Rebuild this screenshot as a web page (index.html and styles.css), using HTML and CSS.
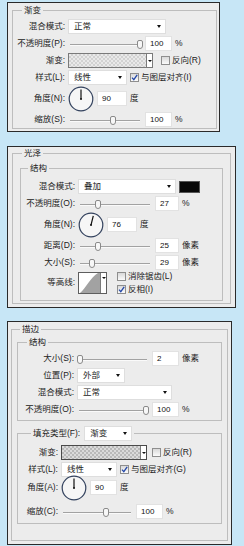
FILE: index.html
```html
<!DOCTYPE html>
<html lang="zh-CN">
<head>
    <meta charset="UTF-8">
    <meta name="viewport" content="width=device-width, initial-scale=1.0">
    <title>图层样式</title>
    <link rel="stylesheet" href="styles.css">
</head>
<body>
    <!-- 渐变叠加 -->
    <div class="panel p1">
        <fieldset class="g1">
            <legend>渐变</legend>
            <div class="row">
                <span class="lbl">混合模式:</span>
                <div class="select mode"><span>正常</span><i class="arrow"></i></div>
            </div>
            <div class="row">
                <span class="lbl">不透明度(P):</span>
                <div class="slider"><div class="track"><span class="thumb" style="left:100%"></span></div></div>
                <span class="num">100</span>
                <span class="unit">%</span>
            </div>
            <div class="row">
                <span class="lbl">渐变:</span>
                <div class="gradient"><span class="checker"></span><span class="drop"><i class="arrow"></i></span></div>
                <label class="check"><span class="box"></span>反向(R)</label>
            </div>
            <div class="row">
                <span class="lbl">样式(L):</span>
                <div class="select style-sel"><span>线性</span><i class="arrow"></i></div>
                <label class="check"><span class="box"><svg width="7" height="7" viewBox="0 0 7 7"><path d="M1 3.6 L2.8 5.6 L6.2 0.8" fill="none" stroke="#2347a8" stroke-width="1.3"/></svg></span>与图层对齐(I)</label>
            </div>
            <div class="row dial-row">
                <span class="lbl">角度(N):</span>
                <svg class="dial" width="26" height="26" viewBox="0 0 26 26">
                    <circle cx="13" cy="13" r="11.8" fill="#f6f6f6" stroke="#33425e" stroke-width="1.2"/>
                    <line x1="13" y1="13" x2="13" y2="3.5" stroke="#111" stroke-width="1.2"/>
                    <circle cx="13" cy="13" r="1" fill="#111"/>
                </svg>
                <span class="num wide">90</span>
                <span class="unit">度</span>
            </div>
            <div class="row">
                <span class="lbl">缩放(S):</span>
                <div class="slider"><div class="track"><span class="thumb" style="left:62%"></span></div></div>
                <span class="num">100</span>
                <span class="unit">%</span>
            </div>
        </fieldset>
    </div>

    <!-- 光泽 -->
    <div class="panel p2">
        <fieldset class="g2">
            <legend>光泽</legend>
            <fieldset class="sub">
                <legend>结构</legend>
                <div class="row">
                    <span class="lbl">混合模式:</span>
                    <div class="select mode"><span>叠加</span><i class="arrow"></i></div>
                    <span class="color"></span>
                </div>
                <div class="row">
                    <span class="lbl">不透明度(O):</span>
                    <div class="slider"><div class="track"><span class="thumb" style="left:25%"></span></div></div>
                    <span class="num">27</span>
                    <span class="unit">%</span>
                </div>
                <div class="row dial-row">
                    <span class="lbl">角度(N):</span>
                    <svg class="dial" width="26" height="26" viewBox="0 0 26 26">
                        <circle cx="13" cy="13" r="11.8" fill="#f6f6f6" stroke="#33425e" stroke-width="1.2"/>
                        <line x1="13" y1="13" x2="15.3" y2="3.8" stroke="#111" stroke-width="1.2"/>
                        <circle cx="13" cy="13" r="1" fill="#111"/>
                    </svg>
                    <span class="num wide">76</span>
                    <span class="unit">度</span>
                </div>
                <div class="row">
                    <span class="lbl">距离(D):</span>
                    <div class="slider"><div class="track"><span class="thumb" style="left:25%"></span></div></div>
                    <span class="num">25</span>
                    <span class="unit">像素</span>
                </div>
                <div class="row">
                    <span class="lbl">大小(S):</span>
                    <div class="slider"><div class="track"><span class="thumb" style="left:17%"></span></div></div>
                    <span class="num">29</span>
                    <span class="unit">像素</span>
                </div>
                <div class="row contour-row">
                    <span class="lbl">等高线:</span>
                    <div class="contour">
                        <svg width="21" height="20" viewBox="0 0 21 20"><path d="M1 20 C7 15 11 5 19 0 L21 0 L21 20 Z" fill="#a2a2a2"/></svg>
                        <span class="drop top"><i class="arrow"></i></span>
                    </div>
                    <div class="checks">
                        <label class="check"><span class="box"></span>消除锯齿(L)</label>
                        <label class="check"><span class="box"><svg width="7" height="7" viewBox="0 0 7 7"><path d="M1 3.6 L2.8 5.6 L6.2 0.8" fill="none" stroke="#2347a8" stroke-width="1.3"/></svg></span>反相(I)</label>
                    </div>
                </div>
            </fieldset>
        </fieldset>
    </div>

    <!-- 描边 -->
    <div class="panel p3">
        <fieldset class="g3">
            <legend>描边</legend>
            <fieldset class="sub">
                <legend>结构</legend>
                <div class="row">
                    <span class="lbl">大小(S):</span>
                    <div class="slider"><div class="track"><span class="thumb" style="left:1%"></span></div></div>
                    <span class="num">2</span>
                    <span class="unit">像素</span>
                </div>
                <div class="row">
                    <span class="lbl">位置(P):</span>
                    <div class="select pos"><span>外部</span><i class="arrow"></i></div>
                </div>
                <div class="row">
                    <span class="lbl">混合模式:</span>
                    <div class="select mode"><span>正常</span><i class="arrow"></i></div>
                </div>
                <div class="row">
                    <span class="lbl">不透明度(O):</span>
                    <div class="slider"><div class="track"><span class="thumb" style="left:98%"></span></div></div>
                    <span class="num">100</span>
                    <span class="unit">%</span>
                </div>
            </fieldset>
            <fieldset class="sub fill-grp">
                <legend>
                    <span>填充类型(F):</span>
                    <div class="select kind"><span>渐变</span><i class="arrow"></i></div>
                </legend>
                <div class="row">
                    <span class="lbl">渐变:</span>
                    <div class="gradient dark"><span class="checker"></span><span class="drop"><i class="arrow"></i></span></div>
                    <label class="check"><span class="box"></span>反向(R)</label>
                </div>
                <div class="row">
                    <span class="lbl">样式(L):</span>
                    <div class="select style-sel"><span>线性</span><i class="arrow"></i></div>
                    <label class="check"><span class="box"><svg width="7" height="7" viewBox="0 0 7 7"><path d="M1 3.6 L2.8 5.6 L6.2 0.8" fill="none" stroke="#2347a8" stroke-width="1.3"/></svg></span>与图层对齐(G)</label>
                </div>
                <div class="row dial-row">
                    <span class="lbl">角度(A):</span>
                    <svg class="dial" width="26" height="26" viewBox="0 0 26 26">
                        <circle cx="13" cy="13" r="11.8" fill="#f6f6f6" stroke="#33425e" stroke-width="1.2"/>
                        <line x1="13" y1="13" x2="13" y2="3.5" stroke="#111" stroke-width="1.2"/>
                        <circle cx="13" cy="13" r="1" fill="#111"/>
                    </svg>
                    <span class="num">90</span>
                    <span class="unit">度</span>
                </div>
                <div class="row last">
                    <span class="lbl">缩放(C):</span>
                    <div class="slider"><div class="track"><span class="thumb" style="left:63%"></span></div></div>
                    <span class="num">100</span>
                    <span class="unit">%</span>
                </div>
            </fieldset>
        </fieldset>
    </div>
</body>
</html>
```

FILE: styles.css
```css
body {
    margin: 0;
    padding: 2px 0 0 7px;
    background-color: #c7e6f6;
    font-family: "Liberation Sans", "Noto Sans CJK SC", sans-serif;
    font-size: 8.5px;
    line-height: 11px;
    color: #222;
}

.panel {
    box-sizing: border-box;
    background-color: #ececec;
    border: 1px solid #2a2a2a;
}
.p1 { width: 213px; }
.p2 { width: 229px; margin-top: 14px; }
.p3 { width: 225px; margin-top: 13px; }

fieldset {
    margin: 0;
    padding: 0;
    min-width: 0;
    border: 1px solid #bdbdbd;
}
legend {
    padding: 0 2px;
    line-height: 11px;
}

/* groups */
.g1 {
    margin: 2px 2px 2px 4px;
    padding-top: 2px;
}
.g1 legend { margin-left: 9px; }
.g1 .lbl { width: 52px; }

.g2 { margin: 1px 4px 3px 4px; }
.g2 > legend { margin-left: 9px; }
.g2 .sub {
    margin: 4px 7px 2px 7px;
    padding: 4px 0 6px;
}
.g2 .sub > legend { margin-left: 7px; }
.g2 .lbl { width: 54px; }
.g2 .num { width: 24px; }
.g2 .num.wide { width: 30px; }

.g3 {
    margin: 2px 3px 3px 3px;
    padding-bottom: 16px;
}
.g3 > legend { margin-left: 8px; }
.g3 .sub {
    margin: 2px 5px 0 5px;
    padding: 2px 0 2px;
}
.g3 .sub > legend { margin-left: 9px; }
.g3 .lbl { width: 56px; }
.g3 .track { width: 68px; }

.g3 .fill-grp {
    margin-top: 5px;
    padding: 3px 0 0;
}
.g3 .fill-grp > legend {
    display: flex;
    align-items: center;
    gap: 4px;
    margin-left: 13px;
    line-height: 15px;
}
.fill-grp .lbl { width: 40px; }
.fill-grp .dial-row {
    height: 24px;
    margin-top: -3px;
}
.fill-grp .last { height: 23px; }

/* rows */
.row {
    display: flex;
    align-items: center;
    gap: 3px;
    height: 17px;
}
.row.dial-row { height: 25px; }
.row.contour-row { height: 23px; }

.lbl {
    flex: none;
    text-align: right;
    white-space: nowrap;
}
.unit { white-space: nowrap; }

/* controls */
.select {
    flex: none;
    box-sizing: border-box;
    display: flex;
    align-items: center;
    justify-content: space-between;
    height: 15px;
    padding: 0 4px 0 5px;
    background-color: #fff;
    border: 1px solid #dedede;
}
.select.mode { width: 98px; }
.select.style-sel { width: 59px; }
.select.pos { width: 48px; }
.select.kind { width: 48px; }
.g3 .select.mode { width: 95px; }
.fill-grp .select.style-sel { width: 56px; }

.arrow {
    display: block;
    width: 0;
    height: 0;
    border-top: 3px solid #111;
    border-left: 2.5px solid transparent;
    border-right: 2.5px solid transparent;
}

.num {
    flex: none;
    box-sizing: border-box;
    width: 27px;
    height: 15px;
    padding-left: 4px;
    background-color: #fff;
    border: 1px solid #e2e2e2;
    font-size: 8px;
    line-height: 13px;
    color: #111;
}
.num.wide { width: 30px; }

.slider {
    flex: none;
    padding: 0 2px;
}
.track {
    position: relative;
    width: 70px;
    height: 10px;
}
.track::before {
    content: "";
    position: absolute;
    left: 0;
    right: 0;
    top: 5px;
    height: 1px;
    background-color: #a2a2a2;
    box-shadow: 0 1px 0 #fafafa;
}
.thumb {
    position: absolute;
    top: 1px;
    box-sizing: border-box;
    width: 6px;
    height: 9px;
    margin-left: -3px;
    background-color: #f7f7f7;
    border: 1px solid #8a8a8a;
    border-radius: 2px 2px 3px 3px;
}

.gradient {
    flex: none;
    box-sizing: border-box;
    display: flex;
    width: 85px;
    height: 15px;
    margin-right: 5px;
    border: 1px solid #7a7a7a;
}
.fill-grp .gradient { width: 86px; margin-right: 2px; }
.checker {
    flex: 1;
    background: repeating-conic-gradient(#d2d2d2 0 25%, #e9e9e9 0 50%) 0 0 / 4px 4px;
}
.gradient.dark { border-color: #4a4a4a; }
.gradient.dark .checker {
    background: repeating-conic-gradient(#b9b9b9 0 25%, #dadada 0 50%) 0 0 / 4px 4px;
}
.drop {
    box-sizing: border-box;
    display: flex;
    align-items: center;
    justify-content: center;
    width: 6px;
    background-color: #fff;
    border-left: 1px solid #7a7a7a;
}
.drop.top {
    align-items: flex-start;
    padding-top: 4px;
}
.drop .arrow {
    border-top-width: 2.5px;
    border-left-width: 2px;
    border-right-width: 2px;
}

.check {
    display: flex;
    align-items: center;
    gap: 2px;
    white-space: nowrap;
}
.box {
    box-sizing: border-box;
    display: flex;
    align-items: center;
    justify-content: center;
    width: 9px;
    height: 9px;
    border: 1px solid #8e8e8e;
    background: linear-gradient(#d9d9d9, #fbfbfb);
}

.dial { flex: none; }

.color {
    box-sizing: border-box;
    width: 21px;
    height: 12px;
    background-color: #080808;
    border: 1px solid #555;
}

.contour {
    flex: none;
    box-sizing: border-box;
    display: flex;
    width: 29px;
    height: 22px;
    background-color: #fff;
    border: 1px solid #5e5e5e;
}
.contour svg { display: block; }
.checks {
    display: flex;
    flex-direction: column;
    gap: 2px;
    margin-left: 7px;
}
```
